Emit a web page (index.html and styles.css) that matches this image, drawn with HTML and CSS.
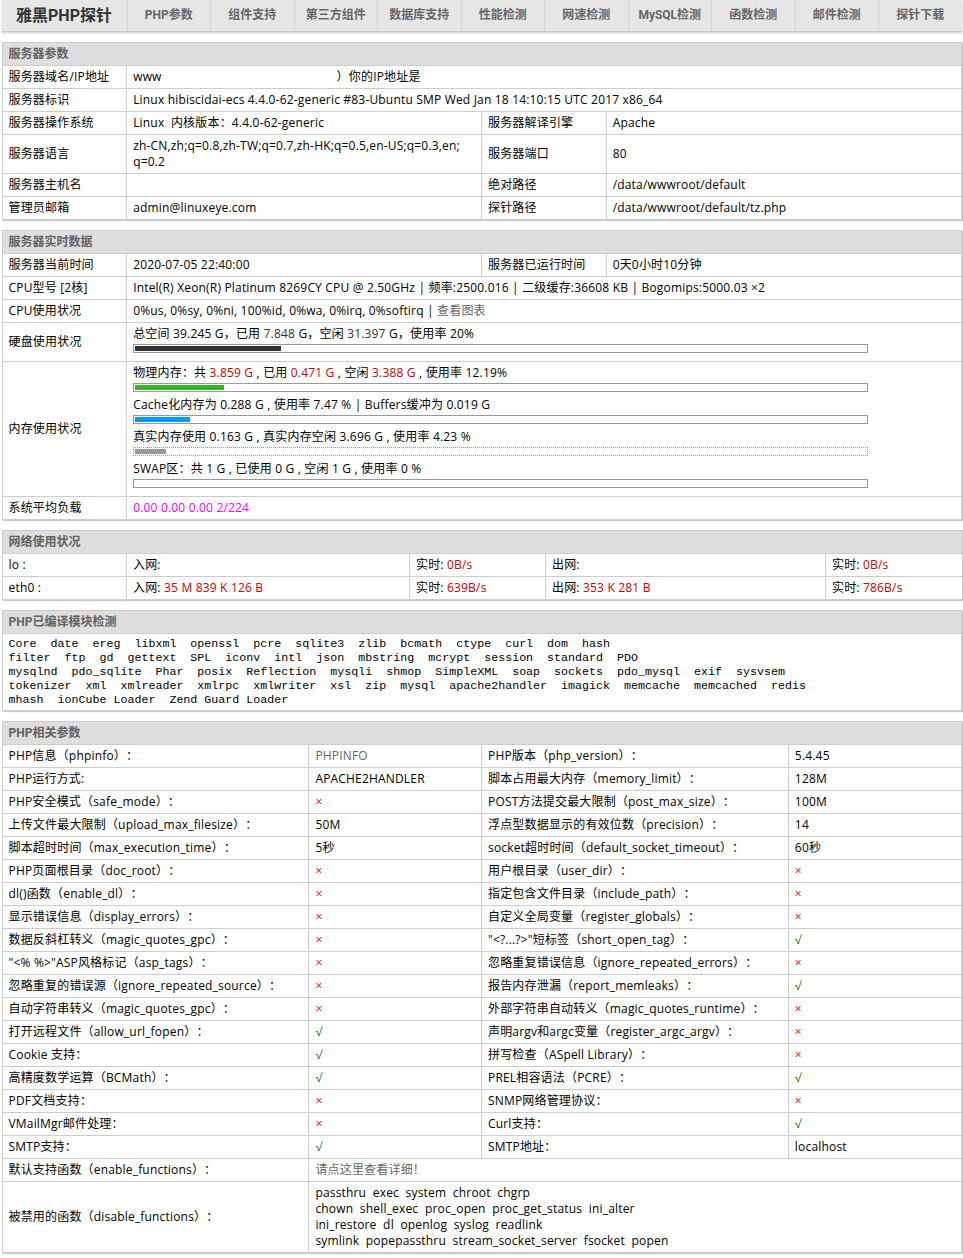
FILE: index.html
```html
<!DOCTYPE html>
<html lang="zh-CN">
<head>
<meta charset="utf-8">
<title>雅黑PHP探针</title>
<link rel="stylesheet" href="styles.css">
</head>
<body>
<div class="page">
  <nav class="nav">
    <a class="nav-item brand" href="#">雅黑PHP探针</a>
    <a class="nav-item" href="#php">PHP参数</a>
    <a class="nav-item" href="#">组件支持</a>
    <a class="nav-item" href="#">第三方组件</a>
    <a class="nav-item" href="#">数据库支持</a>
    <a class="nav-item" href="#">性能检测</a>
    <a class="nav-item" href="#">网速检测</a>
    <a class="nav-item" href="#">MySQL检测</a>
    <a class="nav-item" href="#">函数检测</a>
    <a class="nav-item" href="#">邮件检测</a>
    <a class="nav-item" href="#">探针下载</a>
  </nav>

  <table class="tb">
    <colgroup><col class="c13"><col class="c37"><col class="c13"><col class="c37"></colgroup>
    <tr><th colspan="4">服务器参数</th></tr>
    <tr><td>服务器域名/IP地址</td><td colspan="3">www<span class="masked"></span>）你的IP地址是</td></tr>
    <tr><td>服务器标识</td><td colspan="3">Linux hibiscidai-ecs 4.4.0-62-generic #83-Ubuntu SMP Wed Jan 18 14:10:15 UTC 2017 x86_64</td></tr>
    <tr><td>服务器操作系统</td><td>Linux&nbsp;&nbsp;内核版本：4.4.0-62-generic</td><td>服务器解译引擎</td><td>Apache</td></tr>
    <tr><td>服务器语言</td><td>zh-CN,zh;q=0.8,zh-TW;q=0.7,zh-HK;q=0.5,en-US;q=0.3,en;<br>q=0.2</td><td>服务器端口</td><td>80</td></tr>
    <tr><td>服务器主机名</td><td></td><td>绝对路径</td><td>/data/wwwroot/default</td></tr>
    <tr><td>管理员邮箱</td><td>admin@linuxeye.com</td><td>探针路径</td><td>/data/wwwroot/default/tz.php</td></tr>
  </table>

  <table class="tb">
    <colgroup><col class="c13"><col class="c37"><col class="c13"><col class="c37"></colgroup>
    <tr><th colspan="4">服务器实时数据</th></tr>
    <tr><td>服务器当前时间</td><td>2020-07-05 22:40:00</td><td>服务器已运行时间</td><td>0天0小时10分钟</td></tr>
    <tr><td>CPU型号 [2核]</td><td colspan="3">Intel(R) Xeon(R) Platinum 8269CY CPU @ 2.50GHz | 频率:2500.016 | 二级缓存:36608 KB | Bogomips:5000.03 ×2</td></tr>
    <tr><td>CPU使用状况</td><td colspan="3">0%us, 0%sy, 0%ni, 100%id, 0%wa, 0%irq, 0%softirq | <a class="lnk" href="#">查看图表</a></td></tr>
    <tr><td>硬盘使用状况</td><td colspan="3">总空间 39.245&nbsp;G，已用 <span class="dim">7.848</span>&nbsp;G，空闲 <span class="dim">31.397</span>&nbsp;G，使用率 20%
      <div class="bar"><div class="fill fill-black" style="width:20%"></div></div></td></tr>
    <tr><td>内存使用状况</td><td colspan="3">
      物理内存：共 <span class="red">3.859 G</span> , 已用 <span class="red">0.471 G</span> , 空闲 <span class="red">3.388 G</span> , 使用率 12.19%
      <div class="bar"><div class="fill fill-green" style="width:12.19%"></div></div>
      Cache化内存为 0.288 G , 使用率 7.47 % | Buffers缓冲为 0.019 G
      <div class="bar"><div class="fill fill-blue" style="width:7.47%"></div></div>
      真实内存使用 0.163 G , 真实内存空闲 3.696 G , 使用率 4.23 %
      <div class="bar bar-dotted"><div class="fill fill-gray" style="width:4.23%"></div></div>
      SWAP区：共 1 G , 已使用 0 G , 空闲 1 G , 使用率 0 %
      <div class="bar"><div class="fill fill-red" style="width:0%"></div></div>
    </td></tr>
    <tr><td>系统平均负载</td><td colspan="3" class="num">0.00 0.00 0.00 2/224</td></tr>
  </table>

  <table class="tb">
    <colgroup><col class="n1"><col class="n2"><col class="n3"><col class="n4"><col class="n5"></colgroup>
    <tr><th colspan="5">网络使用状况</th></tr>
    <tr><td>lo :</td><td>入网: <span class="red"></span></td><td>实时: <span class="red">0B/s</span></td><td>出网: <span class="red"></span></td><td>实时: <span class="red">0B/s</span></td></tr>
    <tr><td>eth0 :</td><td>入网: <span class="red">35 M 839 K 126 B</span></td><td>实时: <span class="red">639B/s</span></td><td>出网: <span class="red">353 K 281 B</span></td><td>实时: <span class="red">786B/s</span></td></tr>
  </table>

  <table class="tb">
    <tr><th>PHP已编译模块检测</th></tr>
    <tr><td class="mono">Core&nbsp;&nbsp;date&nbsp;&nbsp;ereg&nbsp;&nbsp;libxml&nbsp;&nbsp;openssl&nbsp;&nbsp;pcre&nbsp;&nbsp;sqlite3&nbsp;&nbsp;zlib&nbsp;&nbsp;bcmath&nbsp;&nbsp;ctype&nbsp;&nbsp;curl&nbsp;&nbsp;dom&nbsp;&nbsp;hash&nbsp;&nbsp;<br>filter&nbsp;&nbsp;ftp&nbsp;&nbsp;gd&nbsp;&nbsp;gettext&nbsp;&nbsp;SPL&nbsp;&nbsp;iconv&nbsp;&nbsp;intl&nbsp;&nbsp;json&nbsp;&nbsp;mbstring&nbsp;&nbsp;mcrypt&nbsp;&nbsp;session&nbsp;&nbsp;standard&nbsp;&nbsp;PDO&nbsp;&nbsp;<br>mysqlnd&nbsp;&nbsp;pdo_sqlite&nbsp;&nbsp;Phar&nbsp;&nbsp;posix&nbsp;&nbsp;Reflection&nbsp;&nbsp;mysqli&nbsp;&nbsp;shmop&nbsp;&nbsp;SimpleXML&nbsp;&nbsp;soap&nbsp;&nbsp;sockets&nbsp;&nbsp;pdo_mysql&nbsp;&nbsp;exif&nbsp;&nbsp;sysvsem&nbsp;&nbsp;<br>tokenizer&nbsp;&nbsp;xml&nbsp;&nbsp;xmlreader&nbsp;&nbsp;xmlrpc&nbsp;&nbsp;xmlwriter&nbsp;&nbsp;xsl&nbsp;&nbsp;zip&nbsp;&nbsp;mysql&nbsp;&nbsp;apache2handler&nbsp;&nbsp;imagick&nbsp;&nbsp;memcache&nbsp;&nbsp;memcached&nbsp;&nbsp;redis&nbsp;&nbsp;<br>mhash&nbsp;&nbsp;ionCube Loader&nbsp;&nbsp;Zend Guard Loader&nbsp;&nbsp;</td></tr>
  </table>

  <table class="tb" id="php">
    <colgroup><col class="c32"><col class="c18"><col class="c32"><col class="c18"></colgroup>
    <tr><th colspan="4">PHP相关参数</th></tr>
    <tr><td>PHP信息（phpinfo）：</td><td><a class="lnk" href="#">PHPINFO</a></td><td>PHP版本（php_version）：</td><td>5.4.45</td></tr>
    <tr><td>PHP运行方式:</td><td>APACHE2HANDLER</td><td>脚本占用最大内存（memory_limit）：</td><td>128M</td></tr>
    <tr><td>PHP安全模式（safe_mode）：</td><td><span class="no">×</span></td><td>POST方法提交最大限制（post_max_size）：</td><td>100M</td></tr>
    <tr><td>上传文件最大限制（upload_max_filesize）：</td><td>50M</td><td>浮点型数据显示的有效位数（precision）：</td><td>14</td></tr>
    <tr><td>脚本超时时间（max_execution_time）：</td><td>5秒</td><td>socket超时时间（default_socket_timeout）：</td><td>60秒</td></tr>
    <tr><td>PHP页面根目录（doc_root）：</td><td><span class="no">×</span></td><td>用户根目录（user_dir）：</td><td><span class="no">×</span></td></tr>
    <tr><td>dl()函数（enable_dl）：</td><td><span class="no">×</span></td><td>指定包含文件目录（include_path）：</td><td><span class="no">×</span></td></tr>
    <tr><td>显示错误信息（display_errors）：</td><td><span class="no">×</span></td><td>自定义全局变量（register_globals）：</td><td><span class="no">×</span></td></tr>
    <tr><td>数据反斜杠转义（magic_quotes_gpc）：</td><td><span class="no">×</span></td><td>"&lt;?...?&gt;"短标签（short_open_tag）：</td><td><span class="yes">√</span></td></tr>
    <tr><td>"&lt;% %&gt;"ASP风格标记（asp_tags）：</td><td><span class="no">×</span></td><td>忽略重复错误信息（ignore_repeated_errors）：</td><td><span class="no">×</span></td></tr>
    <tr><td>忽略重复的错误源（ignore_repeated_source）：</td><td><span class="no">×</span></td><td>报告内存泄漏（report_memleaks）：</td><td><span class="yes">√</span></td></tr>
    <tr><td>自动字符串转义（magic_quotes_gpc）：</td><td><span class="no">×</span></td><td>外部字符串自动转义（magic_quotes_runtime）：</td><td><span class="no">×</span></td></tr>
    <tr><td>打开远程文件（allow_url_fopen）：</td><td><span class="yes">√</span></td><td>声明argv和argc变量（register_argc_argv）：</td><td><span class="no">×</span></td></tr>
    <tr><td>Cookie 支持：</td><td><span class="yes">√</span></td><td>拼写检查（ASpell Library）：</td><td><span class="no">×</span></td></tr>
    <tr><td>高精度数学运算（BCMath）：</td><td><span class="yes">√</span></td><td>PREL相容语法（PCRE）：</td><td><span class="yes">√</span></td></tr>
    <tr><td>PDF文档支持：</td><td><span class="no">×</span></td><td>SNMP网络管理协议：</td><td><span class="no">×</span></td></tr>
    <tr><td>VMailMgr邮件处理：</td><td><span class="no">×</span></td><td>Curl支持：</td><td><span class="yes">√</span></td></tr>
    <tr><td>SMTP支持：</td><td><span class="yes">√</span></td><td>SMTP地址：</td><td>localhost</td></tr>
    <tr><td>默认支持函数（enable_functions）：</td><td colspan="3"><a class="lnk" href="#">请点这里查看详细！</a></td></tr>
    <tr><td>被禁用的函数（disable_functions）：</td><td colspan="3">passthru&nbsp;&nbsp;exec&nbsp;&nbsp;system&nbsp;&nbsp;chroot&nbsp;&nbsp;chgrp<br>chown&nbsp;&nbsp;shell_exec&nbsp;&nbsp;proc_open&nbsp;&nbsp;proc_get_status&nbsp;&nbsp;ini_alter<br>ini_restore&nbsp;&nbsp;dl&nbsp;&nbsp;openlog&nbsp;&nbsp;syslog&nbsp;&nbsp;readlink<br>symlink&nbsp;&nbsp;popepassthru&nbsp;&nbsp;stream_socket_server&nbsp;&nbsp;fsocket&nbsp;&nbsp;popen</td></tr>
  </table>
</div>
</body>
</html>
```

FILE: styles.css
```css
html, body {
  margin: 0;
  padding: 0;
  background: #fff;
}
body {
  font-family: "Open Sans", "Noto Sans CJK SC", sans-serif;
  font-size: 12px;
  line-height: 16px;
  color: #000;
  text-spacing-trim: space-all;
}
.page {
  width: 960px;
  margin: 0 auto;
}
.nav {
  display: flex;
  height: 31px;
  background: #e6e6e6;
  border-bottom: 1px solid #c8c8c8;
  box-shadow: 0 1px 2px #ccc;
  margin-bottom: 10px;
}
.nav-item {
  flex: 1 1 0;
  text-align: center;
  line-height: 31px;
  font-family: Roboto, "Noto Sans CJK SC", sans-serif;
  font-weight: bold;
  color: #666;
  text-decoration: none;
  border-left: 1px solid #d6d6d6;
}
.nav-item.brand {
  flex: 0 0 125px;
  font-size: 16px;
  color: #333;
  border-left: 0;
}
.tb {
  width: 100%;
  border-collapse: collapse;
  border-spacing: 0;
  table-layout: fixed;
  margin: 0 0 10px;
  box-shadow: 1px 1px 1px #ccc;
}
.tb th {
  padding: 3px 6px;
  background: #dedede;
  color: #626262;
  font-weight: bold;
  text-align: left;
  border: 1px solid #ccc;
  font-family: Roboto, "Noto Sans CJK SC", sans-serif;
}
.tb td {
  padding: 3px 6px;
  border: 1px solid #ccc;
  background: #fff;
  vertical-align: middle;
  letter-spacing: 0.18px;
}
.c13 { width: 13%; }
.c37 { width: 37%; }
.c32 { width: 32%; }
.c18 { width: 18%; }
.n1 { width: 124.5px; }
.n2 { width: 283px; }
.n3 { width: 136px; }
.n4 { width: 280px; }
.n5 { width: 136.5px; }
.masked {
  display: inline-block;
  width: 175px;
}
.lnk {
  color: #666;
  text-decoration: none;
}
.dim { color: #333; }
.red { color: #cc0000; }
.num { color: #f800fe; }
.no { color: #f00; }
.yes { color: #008000; }
.bar {
  border: 1px solid #999;
  background: #fff;
  height: 5px;
  width: 89%;
  margin: 2px 0 5px;
  padding: 1px;
  overflow: hidden;
}
.bar-dotted { border-style: dotted; }
.fill { height: 5px; }
.fill-black { background: #333; }
.fill-green { background: #36b52a; }
.fill-blue { background: #0099ff; }
.fill-gray { background: #999; }
.fill-red { background: #ff6600; }
.tb td.mono {
  font-family: "Liberation Mono", "Courier New", monospace;
  font-size: 11.67px;
  line-height: 14px;
  letter-spacing: 0;
}
```
